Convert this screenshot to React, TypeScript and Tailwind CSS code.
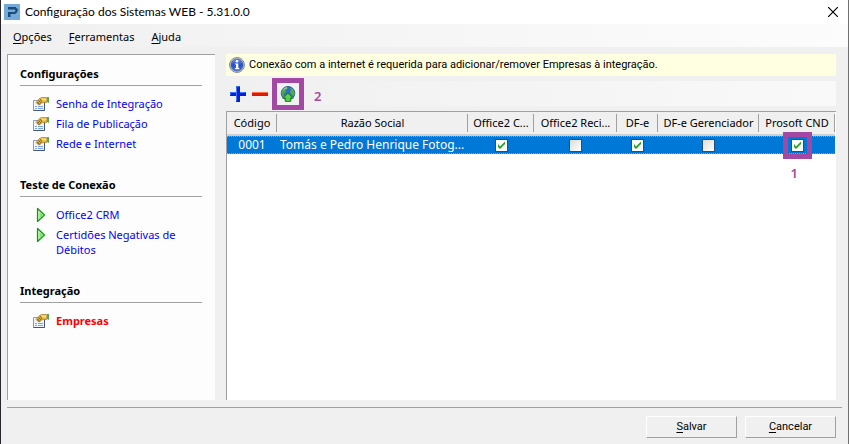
import React from "react";

function PropertiesIcon() {
  return (
    <svg width="16" height="16" viewBox="0 0 16 16" aria-hidden="true" className="shrink-0">
      <path d="M.5 4.5h11v10H.5z" fill="#eef5fd" stroke="#8a9ab4" />
      <path d="M11.5 6v8.500H.5" fill="none" stroke="#3f5678" />
      <path d="M2 10.500h2M2 12.500h2M5 10.500h5M5 12.500h5" stroke="#7fa3dc" />
      <path d="M3 6.500 6.500 2.500 8.500 1.500h5v5h-3L8.500 7 6.500 9 5 8.500z" fill="#e3b53a" stroke="#a57f28" strokeWidth=".7" />
      <path d="M7.500 2.500h6v2H9z" fill="#f8dc7c" />
      <path d="m4 6 2.500 2.500M5.500 4.500l2.500 2.500M7 3l2 2M4.500 7.500l3.500-4M6 8.500l3-3.500" stroke="#7d6020" strokeWidth=".7" />
      <path d="M14 1h2v6l-2-1z" fill="#54a954" />
    </svg>
  );
}

function PlayIcon() {
  return (
    <svg width="16" height="16" viewBox="0 0 16 16" aria-hidden="true" className="shrink-0">
      <path d="M4.500 1.500v13l7-6.500z" fill="#c4f7b4" stroke="#0c960c" strokeWidth="1.200" strokeLinejoin="round" />
      <path d="M6.500 5.500v6.500L10.500 8z" fill="#7ce66c" />
    </svg>
  );
}

function InfoIcon() {
  return (
    <svg width="16" height="16" viewBox="0 0 16 16" aria-hidden="true" className="shrink-0">
      <defs>
        <linearGradient id="info" x1="0" y1="0" x2="0" y2="1">
          <stop offset="0" stopColor="#6f92e0" />
          <stop offset=".5" stopColor="#2450c4" />
          <stop offset="1" stopColor="#3f78e8" />
        </linearGradient>
      </defs>
      <circle cx="8" cy="8" r="7.500" fill="#c0c4ce" stroke="#8a8f9c" />
      <circle cx="8" cy="8" r="6" fill="url(#info)" stroke="#3a4f94" strokeWidth=".6" />
      <circle cx="8" cy="4.300" r="1.300" fill="#fff" />
      <path d="M6 6.500h3.300V11h1v1.200H6V11h1V7.600H6z" fill="#fff" />
    </svg>
  );
}

function GlobeIcon() {
  return (
    <svg width="16" height="16" viewBox="0 0 16 16" aria-hidden="true">
      <circle cx="8" cy="7.200" r="6.800" fill="#2b6fc0" stroke="#1d4f88" strokeWidth=".8" />
      <path d="M1.500 5Q3 1.500 7 .8l1 1.700L5.500 4 6 6 3.500 8l1 2.500L3 11.500Q.8 8.500 1.500 5z" fill="#4fa552" />
      <path d="m10 1.500 3 2 1.500 3-.5 4-2.500-2-1.500-2.500 1-2z" fill="#56ad4c" />
      <path d="M3.500 4Q5 2 7 1.800" fill="none" stroke="#b4dfc4" />
      <path d="m8 7 5.500 5h-2.700V15.500H5.200V12H2.500z" fill="#3dba2c" stroke="#1c7a18" strokeWidth=".8" strokeLinejoin="round" />
      <path d="m8 8.300 3 2.700H9.500V14.500h-3V11H5z" fill="#62cf4c" />
    </svg>
  );
}

function Check({ label, checked = false }: { label: string; checked?: boolean }) {
  return (
    <span className="mx-auto grid size-[13px] place-items-center">
      <input
        type="checkbox"
        aria-label={label}
        defaultChecked={checked}
        className="peer col-start-1 row-start-1 size-[13px] appearance-none border border-[#1c5180] bg-linear-to-br from-[#dcdcd7] to-white checked:from-white"
      />
      <svg
        viewBox="0 0 13 13"
        aria-hidden="true"
        className="pointer-events-none invisible col-start-1 row-start-1 size-[13px] peer-checked:visible"
      >
        <path d="M3 5v3l2 2 5-5V2.500L5 7.500z" fill="#21a121" />
      </svg>
    </span>
  );
}

function Section({ title, children }: { title: string; children: React.ReactNode }) {
  return (
    <section>
      <h2 className="border-b border-[#a0a0a0] pb-[3px] leading-4 font-bold">{title}</h2>
      <ul className="mt-[6px] pl-[13px] leading-[15px]">{children}</ul>
    </section>
  );
}

function Item({ icon, children, active = false }: { icon: React.ReactNode; children: React.ReactNode; active?: boolean }) {
  return (
    <li className="flex items-start gap-[7px] pt-1 pb-px">
      <span className="h-[15px]">{icon}</span>
      <a href="#" className={active ? "font-bold text-[#ff0000]" : "text-[#0000ff]"}>
        {children}
      </a>
    </li>
  );
}

function Mnemonic({ text }: { text: string }) {
  return (
    <>
      <span className="underline underline-offset-2">{text[0]}</span>
      {text.slice(1)}
    </>
  );
}

const columns = ["Código", "Razão Social", "Office2 C...", "Office2 Reci...", "DF-e", "DF-e Gerenciador", "Prosoft CND"];

export default function App() {
  return (
    <div className="flex min-h-screen flex-col border-r border-l border-r-[#707070] border-l-[#2a2630] bg-[#f0f0f0] font-['Noto_Sans','Open_Sans',sans-serif] text-[11px] text-black">
      <header className="flex h-6 items-center gap-[5px] bg-white pr-[10px] pl-[3px]">
        <svg width="16" height="16" viewBox="0 0 16 16" aria-hidden="true">
          <path d="M0 0h16v16H0z" fill="#73aad8" />
          <path d="M4 3h7.500L14 5.500 13 8.500 11 10H6.500v3H4V8h6.500l1-1.300-.7-1.200H4z" fill="#1a4a78" />
        </svg>
        <h1 className="font-['Lato','Noto_Sans',sans-serif] text-xs">Configuração dos Sistemas WEB - 5.31.0.0</h1>
        <button aria-label="Fechar" className="ml-auto">
          <svg width="10" height="10" viewBox="0 0 10 10" aria-hidden="true">
            <path d="m0 0 10 10M10 0 0 10" stroke="#000" strokeWidth="1.200" />
          </svg>
        </button>
      </header>

      <nav className="flex h-[23px] items-center gap-[17px] bg-linear-to-r from-[#f0f0f0] to-[#fcfcfc] pt-1 pl-3">
        {["Opções", "Ferramentas", "Ajuda"].map((m) => (
          <button key={m}>
            <Mnemonic text={m} />
          </button>
        ))}
      </nav>

      <div className="flex grow gap-[11px] pt-[7px] pr-3 pl-[6px]">
        <aside className="flex w-[208px] shrink-0 flex-col gap-[25px] border-t border-l border-[#a0a0a0] bg-[#fdfdfd] pt-[11px] pr-[13px] pb-3 pl-3">
          <Section title="Configurações">
            <Item icon={<PropertiesIcon />}>Senha de Integração</Item>
            <Item icon={<PropertiesIcon />}>Fila de Publicação</Item>
            <Item icon={<PropertiesIcon />}>Rede e Internet</Item>
          </Section>
          <Section title="Teste de Conexão">
            <Item icon={<PlayIcon />}>Office2 CRM</Item>
            <Item icon={<PlayIcon />}>Certidões Negativas de Débitos</Item>
          </Section>
          <Section title="Integração">
            <Item icon={<PropertiesIcon />} active>
              Empresas
            </Item>
          </Section>
        </aside>

        <main className="flex min-w-0 grow flex-col">
          <p className="flex h-[22px] items-center gap-1 bg-[#ffffe1] pl-[3px] font-['Roboto','Noto_Sans',sans-serif]">
            <InfoIcon />
            Conexão com a internet é requerida para adicionar/remover Empresas à integração.
          </p>

          <div className="mt-[5px] flex h-[25px] items-center gap-[6px] bg-linear-to-r from-[#f0f0f0] to-[#f9f9f9] pl-1">
            <button aria-label="Adicionar">
              <svg width="16" height="16" viewBox="0 0 16 16" aria-hidden="true">
                <path d="M6 0h4v6h6v4h-6v6H6v-6H0V6h6z" fill="#0a1fd0" />
                <path d="M6.500 15V.5h3M.5 9V6.500h6M10 6.500h5.500" fill="none" stroke="#3c78ff" />
              </svg>
            </button>
            <button aria-label="Remover">
              <svg width="16" height="16" viewBox="0 0 16 16" aria-hidden="true">
                <path d="M0 6h16v4H0z" fill="#e01808" />
                <path d="M0 6.500h16" stroke="#ff7048" />
              </svg>
            </button>
            <div className="relative ml-[6px] flex">
              <button aria-label="Sincronizar">
                <GlobeIcon />
              </button>
              <span className="absolute -inset-x-2 -inset-y-2 border-[5px] border-[#a349a4]" />
              <span className="absolute top-0 left-[34px] text-[13px] leading-5 font-semibold text-[#a349a4]">2</span>
            </div>
          </div>

          <div className="mt-[5px] grow border-t border-l border-[#a0a0a0] bg-white pr-px">
            <table className="w-full table-fixed border-separate border-spacing-0">
              <colgroup>
                <col className="w-[50px]" />
                <col />
                <col className="w-[66px]" />
                <col className="w-[83px]" />
                <col className="w-[41px]" />
                <col className="w-[101px]" />
                <col className="w-[76px]" />
              </colgroup>
              <thead className="bg-[#f0f0f0]">
                <tr className="h-6">
                  {columns.map((c) => (
                    <th key={c} className="border-b-2 border-[#d0d0d0] bg-[linear-gradient(#a0a0a0,#a0a0a0)] bg-size-[1px_18px] bg-position-[right_2px] bg-no-repeat p-0 leading-5 font-normal whitespace-nowrap">
                      {c}
                    </th>
                  ))}
                </tr>
              </thead>
              <tbody>
                <tr className="h-[18px] bg-[#0078d7] bg-[linear-gradient(90deg,#ff8728_50%,transparent_50%),linear-gradient(90deg,#ff8728_50%,transparent_50%)] bg-size-[2px_1px] bg-position-[left_top,left_bottom] bg-repeat-x text-xs leading-4 text-white *:p-0">
                  <td className="text-center">0001</td>
                  <td className="truncate"><span className="pl-[3px]">Tomás e Pedro Henrique Fotog...</span></td>
                  <td><Check label="Office2 CRM" checked /></td>
                  <td><Check label="Office2 Recibos" /></td>
                  <td><Check label="DF-e" checked /></td>
                  <td><Check label="DF-e Gerenciador" /></td>
                  <td>
                    <div className="relative mx-auto w-[13px]">
                      <Check label="Prosoft CND" checked />
                      <span className="absolute -inset-x-2 -inset-y-[7px] border-[5px] border-[#a349a4]" />
                      <span className="absolute top-6 left-0 text-[13px] leading-5 font-semibold text-[#a349a4]">1</span>
                    </div>
                  </td>
                </tr>
              </tbody>
            </table>
          </div>
        </main>
      </div>

      <footer className="mx-[6px] mt-[7px] flex justify-end gap-2 border-t border-[#a0a0a0] pt-2 pr-[6px] pb-[6px] font-['Roboto','Noto_Sans',sans-serif]">
        {["Salvar", "Cancelar"].map((b) => (
          <button key={b} className="h-[22px] w-[91px] border border-t-white border-r-[#a0a0a0] border-b-[#a0a0a0] border-l-white">
            <Mnemonic text={b} />
          </button>
        ))}
      </footer>
    </div>
  );
}
